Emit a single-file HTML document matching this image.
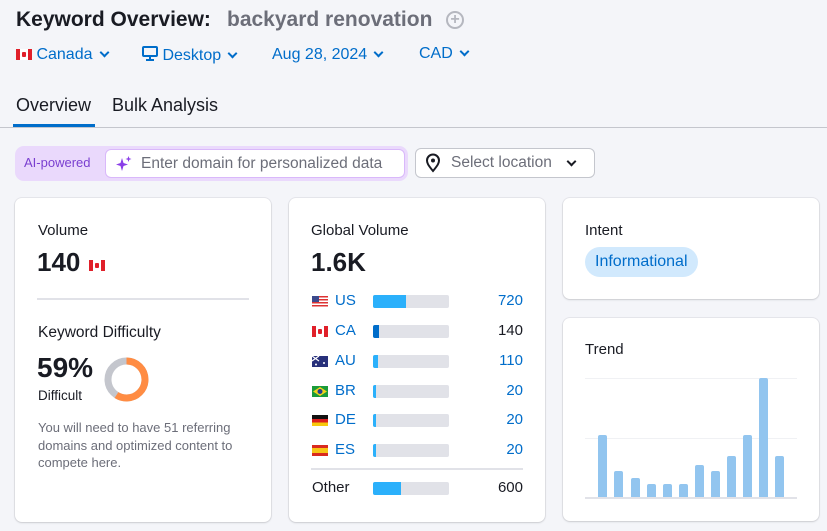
<!DOCTYPE html>
<html><head><meta charset="utf-8"><style>
*{margin:0;padding:0;box-sizing:border-box}
body{width:827px;height:531px;overflow:hidden;background:#f4f5f9;font-family:"Liberation Sans",Arial,sans-serif;color:#191b23;position:relative}
.a{position:absolute;white-space:nowrap}
.blue{color:#006dca}
.card{position:absolute;background:#fff;border-radius:7px;box-shadow:0 1px 2px rgba(0,0,0,.12),0 0 0 1px #e6e7ec}
.chev{display:inline-block;width:7px;height:7px;border-right:2px solid currentColor;border-bottom:2px solid currentColor;transform:rotate(45deg);margin-left:8px;position:relative;top:-3px}
.flagca{display:inline-block;width:16px;height:11px;background:linear-gradient(90deg,#e0202a 0 4px,#fff 4px 12px,#e0202a 12px);position:relative;vertical-align:middle}
.flagca:after{content:"";position:absolute;left:6px;top:3px;width:4px;height:5px;background:#e0202a;border-radius:1px}
.row{position:absolute;left:312px;width:211px;height:20px;font-size:15px}
.bar{position:absolute;left:61px;top:4px;width:76px;height:13px;background:#e1e2e8;border-radius:2px;overflow:hidden}
.bar i{position:absolute;left:0;top:0;bottom:0;background:#2bb0fb}
.num{position:absolute;right:0;top:1px}
.fl{position:absolute;left:0;top:5px;width:16px;height:11px}
.tb{position:absolute;width:9px;background:#92c5ef;border-radius:2px 2px 0 0}
</style></head><body>
<div class="a" style="left:16px;top:8px;font-size:21px;font-weight:bold">Keyword Overview:</div>
<div class="a" style="left:227px;top:8px;font-size:21px;font-weight:bold;color:#6c6e79">backyard renovation</div>
<div class="a" style="left:446px;top:11px;width:18px;height:18px;border:2px solid #b5b7bf;border-radius:50%;color:#b5b7bf;font-size:16px;line-height:13px;text-align:center;font-weight:bold">+</div>

<div class="a blue" style="left:16px;top:46px;font-size:16px"><span class="flagca"></span> Canada<span class="chev"></span></div>
<div class="a blue" style="left:142px;top:46px;font-size:16px"><svg width="16" height="15" viewBox="0 0 16 15" style="vertical-align:-1px"><rect x="1" y="1" width="14" height="9" rx="1" fill="none" stroke="#006dca" stroke-width="2"/><rect x="7" y="10" width="2" height="3" fill="#006dca"/><rect x="4" y="13" width="8" height="2" fill="#006dca"/></svg> Desktop<span class="chev"></span></div>
<div class="a blue" style="left:272px;top:46px;font-size:16px">Aug 28, 2024<span class="chev"></span></div>
<div class="a blue" style="left:419px;top:45px;font-size:16px">CAD<span class="chev"></span></div>

<div class="a" style="left:16px;top:95px;font-size:18px">Overview</div>
<div class="a" style="left:13px;top:124px;width:82px;height:3px;background:#006dca"></div>
<div class="a" style="left:112px;top:95px;font-size:18px">Bulk Analysis</div>
<div class="a" style="left:0;top:127px;width:827px;height:1px;background:#c4c6cd"></div>

<div class="a" style="left:15px;top:146px;width:393px;height:35px;background:#ead9fc;border-radius:9px"></div>
<div class="a" style="left:24px;top:155px;font-size:13px;color:#7a3fd0">AI-powered</div>
<div class="a" style="left:105px;top:149px;width:300px;height:29px;background:#fff;border:1px solid #d9b8fa;border-radius:6px"></div>
<svg class="a" style="left:115px;top:155px" width="18" height="18" viewBox="0 0 18 18"><path d="M7 3 L8.5 8 L13 9.5 L8.5 11 L7 16 L5.5 11 L1 9.5 L5.5 8Z" fill="#8a3ee8"/><path d="M13.5 1 L14.3 3.2 L16.5 4 L14.3 4.8 L13.5 7 L12.7 4.8 L10.5 4 L12.7 3.2Z" fill="#8a3ee8"/></svg>
<div class="a" style="left:141px;top:155px;font-size:15.5px;color:#6c6e79">Enter domain for personalized data</div>
<div class="a" style="left:415px;top:148px;width:180px;height:30px;background:#fff;border:1px solid #c4c6cd;border-radius:6px"></div>
<svg class="a" style="left:425px;top:153px" width="16" height="20" viewBox="0 0 16 20"><path d="M8 18 C3 12 2 10 2 7.5 A6 6 0 0 1 14 7.5 C14 10 13 12 8 18Z" fill="none" stroke="#191b23" stroke-width="2"/><circle cx="8" cy="7.5" r="2" fill="#191b23"/></svg>
<div class="a" style="left:451px;top:154px;font-size:15.5px;color:#6c6e79">Select location</div>
<div class="a" style="left:568px;top:155px;color:#191b23"><span class="chev" style="margin:0"></span></div>

<!-- card 1 -->
<div class="card" style="left:15px;top:198px;width:256px;height:324px"></div>
<div class="a" style="left:38px;top:222px;font-size:15px">Volume</div>
<div class="a" style="left:37px;top:247px;font-size:26px;font-weight:bold">140</div>
<div class="a" style="left:89px;top:257px"><span class="flagca"></span></div>
<div class="a" style="left:37px;top:298px;width:212px;height:2px;background:#e1e2e8"></div>
<div class="a" style="left:38px;top:324px;font-size:15.5px">Keyword Difficulty</div>
<div class="a" style="left:37px;top:352px;font-size:28px;font-weight:bold">59%</div>
<div class="a" style="left:38px;top:388px;font-size:13.5px">Difficult</div>
<svg class="a" style="left:104px;top:357px" width="45" height="45" viewBox="0 0 45 45"><circle cx="22.5" cy="22.5" r="18.5" fill="none" stroke="#c4c6cd" stroke-width="7"/><circle cx="22.5" cy="22.5" r="18.5" fill="none" stroke="#ff8c43" stroke-width="7" stroke-dasharray="68.6 116.2" transform="rotate(-90 22.5 22.5)"/></svg>
<div class="a" style="left:38px;top:419px;font-size:13px;color:#6c6e79;line-height:17.5px;white-space:normal;width:225px">You will need to have 51 referring domains and optimized content to compete here.</div>

<!-- card 2 -->
<div class="card" style="left:289px;top:198px;width:256px;height:324px"></div>
<div class="a" style="left:311px;top:222px;font-size:15px">Global Volume</div>
<div class="a" style="left:311px;top:247px;font-size:26px;font-weight:bold">1.6K</div>

<div class="row" style="top:291px"><svg class="fl" viewBox="0 0 16 11"><rect width="16" height="11" fill="#fff"/><g fill="#d33"><rect y="0" width="16" height="1.5"/><rect y="3" width="16" height="1.5"/><rect y="6" width="16" height="1.5"/><rect y="9" width="16" height="1.5"/></g><rect width="7" height="6" fill="#3c4a8c"/></svg><span class="a blue" style="left:23px;top:1px">US</span><div class="bar"><i style="width:33px"></i></div><span class="num blue">720</span></div>
<div class="row" style="top:321px"><span class="flagca fl" style="position:absolute"></span><span class="a blue" style="left:23px;top:1px">CA</span><div class="bar"><i style="width:6px;background:#006dca"></i></div><span class="num">140</span></div>
<div class="row" style="top:351px"><svg class="fl" viewBox="0 0 16 11"><rect width="16" height="11" fill="#27307a"/><path d="M0 0L7 5M7 0L0 5" stroke="#fff" stroke-width="1.2"/><circle cx="12" cy="7" r="1" fill="#fff"/><circle cx="4" cy="8.5" r="1" fill="#fff"/></svg><span class="a blue" style="left:23px;top:1px">AU</span><div class="bar"><i style="width:5px"></i></div><span class="num blue">110</span></div>
<div class="row" style="top:381px"><svg class="fl" viewBox="0 0 16 11"><rect width="16" height="11" fill="#1b9b3a"/><path d="M8 1L15 5.5L8 10L1 5.5Z" fill="#f2d31b"/><circle cx="8" cy="5.5" r="2.5" fill="#23408e"/></svg><span class="a blue" style="left:23px;top:1px">BR</span><div class="bar"><i style="width:3px"></i></div><span class="num blue">20</span></div>
<div class="row" style="top:410px"><svg class="fl" viewBox="0 0 16 11"><rect width="16" height="4" fill="#111"/><rect y="4" width="16" height="3.5" fill="#dd1f1f"/><rect y="7.5" width="16" height="3.5" fill="#f7c90d"/></svg><span class="a blue" style="left:23px;top:1px">DE</span><div class="bar"><i style="width:3px"></i></div><span class="num blue">20</span></div>
<div class="row" style="top:440px"><svg class="fl" viewBox="0 0 16 11"><rect width="16" height="11" fill="#d92a1e"/><rect y="3" width="16" height="5" fill="#f7c515"/></svg><span class="a blue" style="left:23px;top:1px">ES</span><div class="bar"><i style="width:3px"></i></div><span class="num blue">20</span></div>
<div class="a" style="left:311px;top:468px;width:212px;height:2px;background:#e1e2e8"></div>
<div class="row" style="top:478px"><span class="a" style="left:0;top:1px">Other</span><div class="bar"><i style="width:28px"></i></div><span class="num">600</span></div>

<!-- card 3 -->
<div class="card" style="left:563px;top:198px;width:256px;height:101px"></div>
<div class="a" style="left:585px;top:222px;font-size:15px">Intent</div>
<div class="a" style="left:585px;top:247px;height:30px;padding:0 10px;background:#d1e9fd;color:#006dca;border-radius:15px;font-size:16px;line-height:30px">Informational</div>

<!-- card 4 -->
<div class="card" style="left:563px;top:318px;width:256px;height:203px"></div>
<div class="a" style="left:585px;top:341px;font-size:15px">Trend</div>
<div class="a" style="left:585px;top:378px;width:212px;height:1px;background:#f0f1f4"></div>
<div class="a" style="left:585px;top:438px;width:212px;height:1px;background:#f0f1f4"></div>
<div class="a" style="left:585px;top:497px;width:212px;height:2px;background:#e1e2e8"></div>
<div class="tb" style="left:598px;top:435px;height:62px"></div>
<div class="tb" style="left:614px;top:471px;height:26px"></div>
<div class="tb" style="left:631px;top:478px;height:19px"></div>
<div class="tb" style="left:647px;top:484px;height:13px"></div>
<div class="tb" style="left:663px;top:484px;height:13px"></div>
<div class="tb" style="left:679px;top:484px;height:13px"></div>
<div class="tb" style="left:695px;top:465px;height:32px"></div>
<div class="tb" style="left:711px;top:471px;height:26px"></div>
<div class="tb" style="left:727px;top:456px;height:41px"></div>
<div class="tb" style="left:743px;top:435px;height:62px"></div>
<div class="tb" style="left:759px;top:378px;height:119px"></div>
<div class="tb" style="left:775px;top:456px;height:41px"></div>
</body></html>
